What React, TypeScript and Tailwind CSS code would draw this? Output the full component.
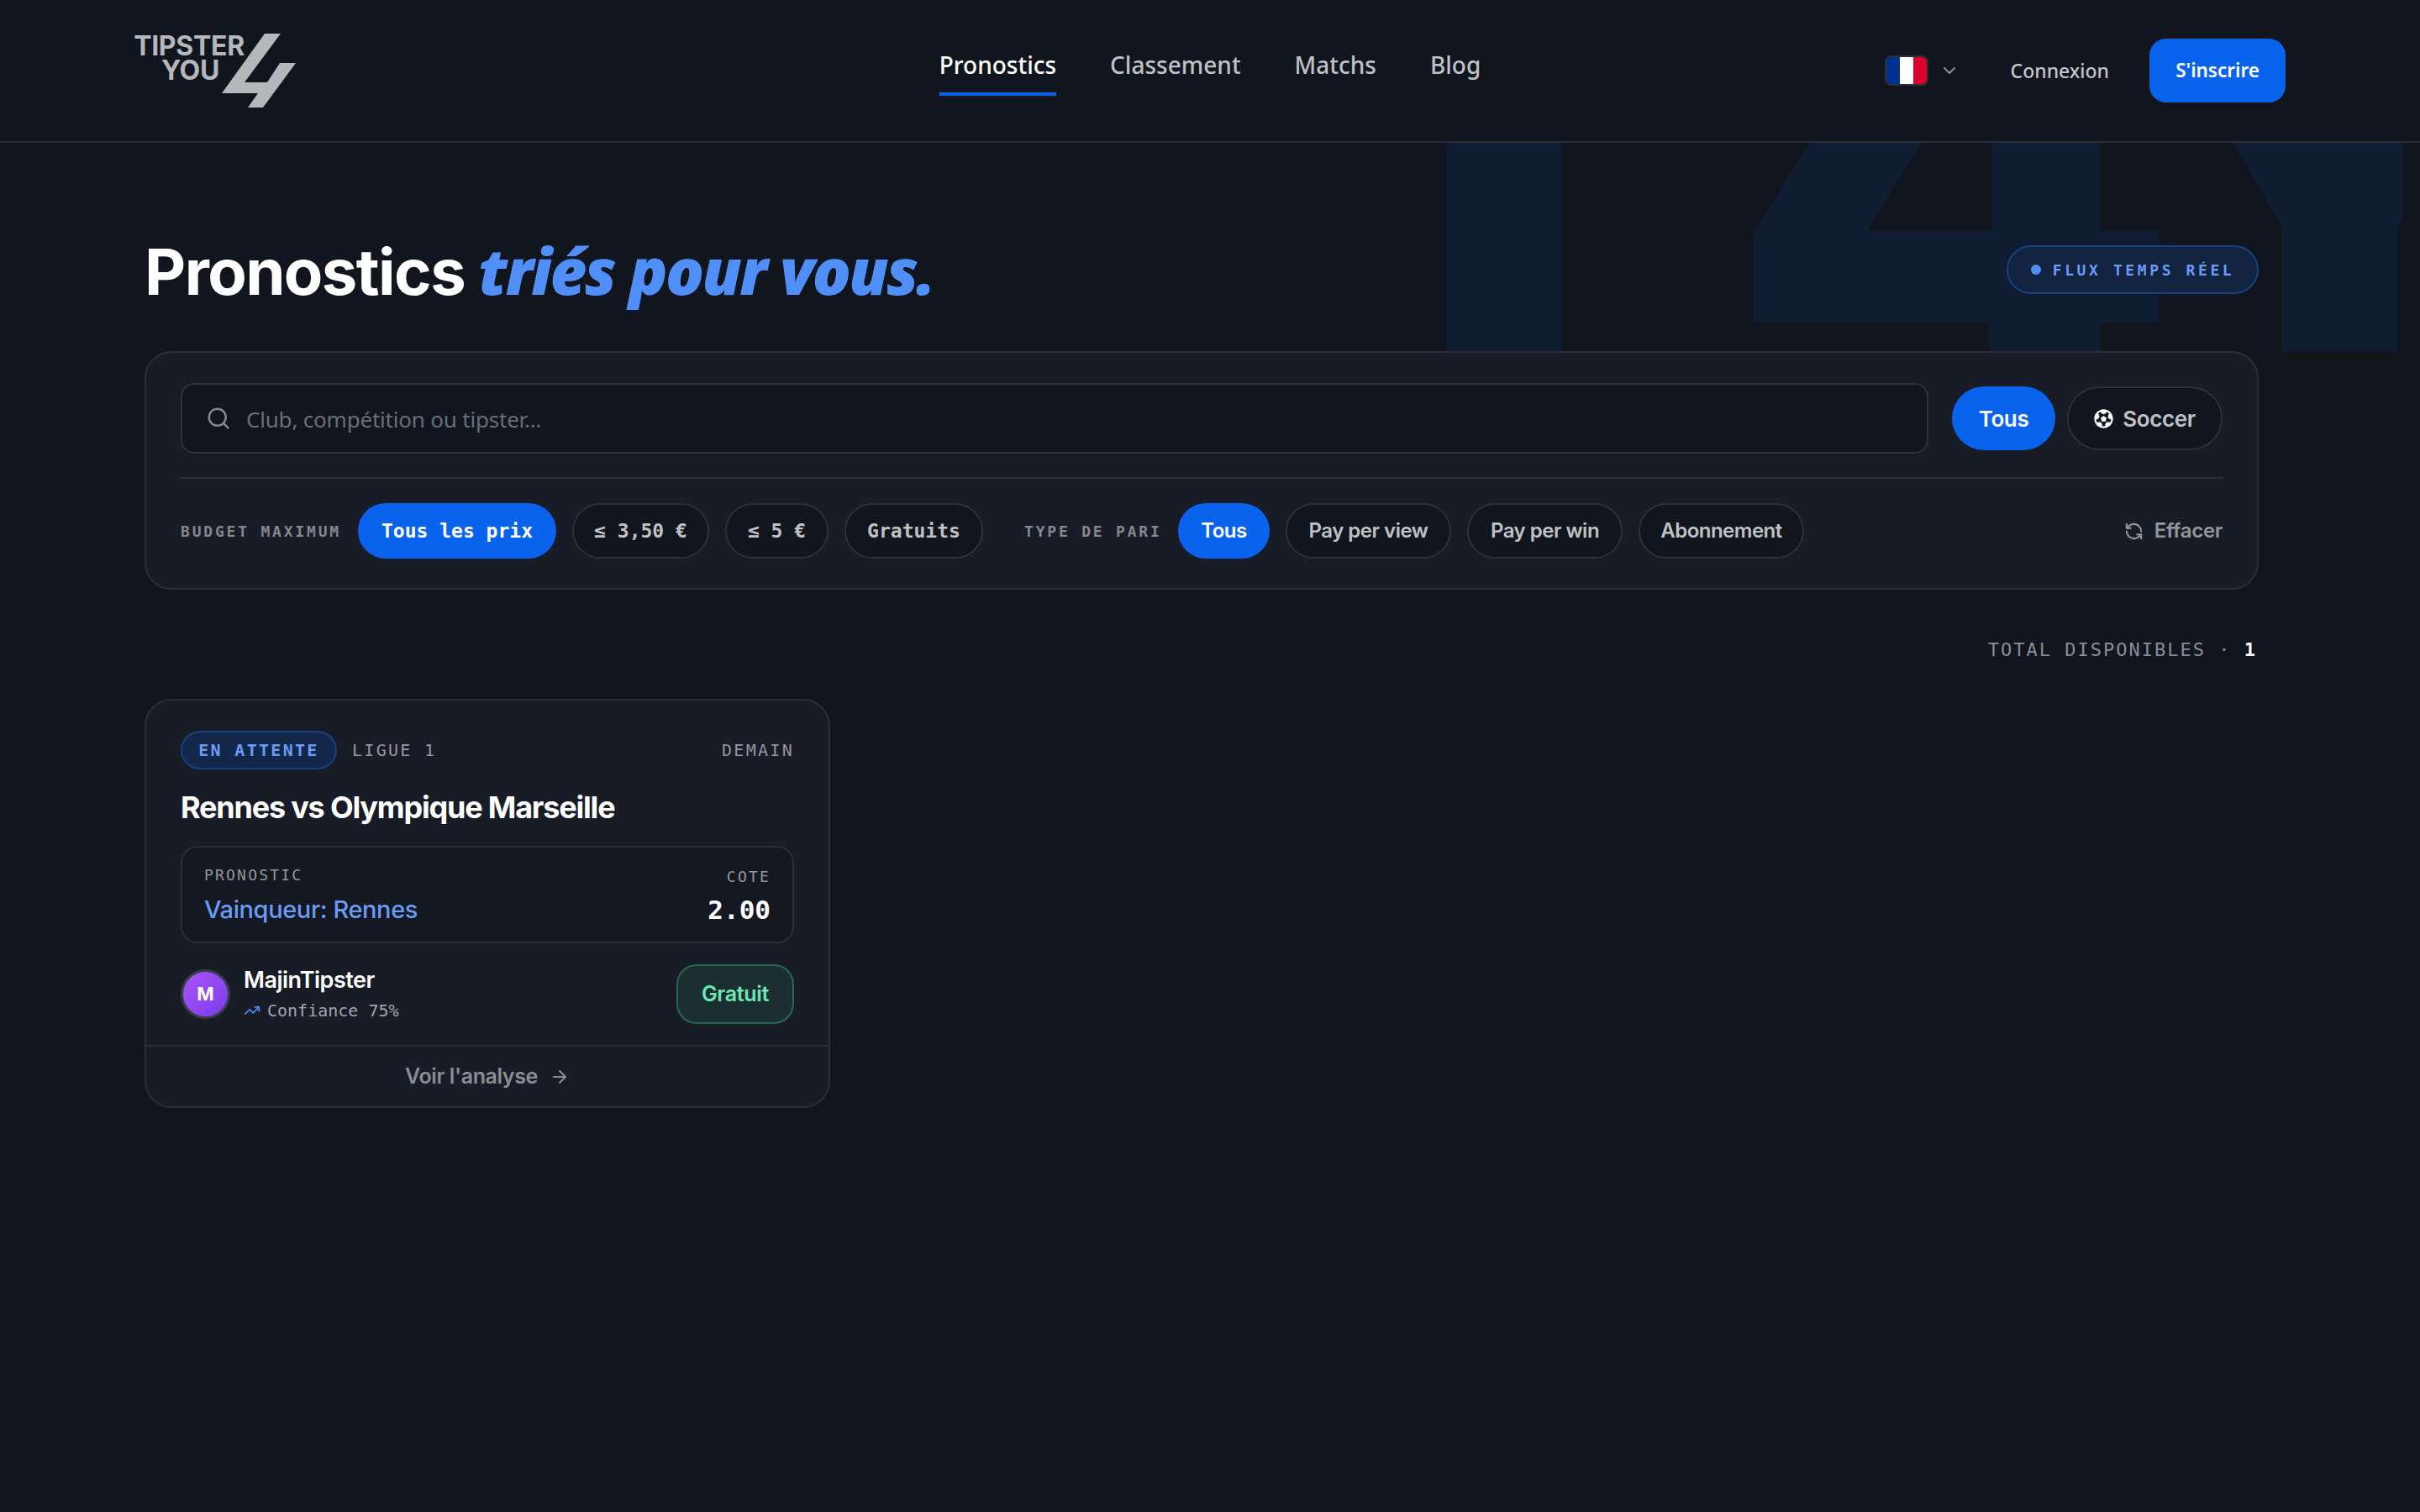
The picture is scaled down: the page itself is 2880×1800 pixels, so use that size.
import { Search, ChevronDown, RefreshCcw, TrendingUp, ArrowRight } from "lucide-react";
import { FaFutbol } from "react-icons/fa";

const sans = "font-['Inter','Noto_Sans',sans-serif]";
const mono = "font-['DejaVu_Sans_Mono',monospace]";

function Chip({ label, active, isMono, w }: { label: string; active?: boolean; isMono?: boolean; w: string }) {
  return (
    <button
      className={
        w +
        " h-[66px] rounded-full flex items-center justify-center whitespace-nowrap " +
        (isMono
          ? mono + " text-[23px] font-bold "
          : "font-['Inter',sans-serif] text-[24px] font-semibold tracking-[-0.5px] ") +
        (active
          ? "bg-[#0a63ec] text-white"
          : "bg-[#11151d] border-2 border-[#2e3038] text-[#bfc1c5]")
      }
    >
      {label}
    </button>
  );
}

export default function App() {
  return (
    <div className="min-h-screen w-full bg-[#11151e] text-white font-['Noto_Sans',sans-serif] overflow-hidden">
      <header className="h-[170px] border-b-2 border-[#2b2e36] px-[160px] flex items-center">
        <div className="flex-1 flex items-start">
          <div className="flex flex-col items-center font-['Inter',sans-serif] font-bold text-[32px] leading-[29px] tracking-[-0.3px] text-[#b5b7bb] w-[130px]">
            <span>TIPSTER</span>
            <span className="pl-[3px]">YOU</span>
          </div>
          <svg width="192" height="88" viewBox="0 0 192 88" className="ml-[-130px]">
            <polygon fill="#b5b7bb" points="155,0 174,0 131,58 158,58 173,35 192,35 153,88 135,88 147,71 104,71" />
          </svg>
        </div>
        <nav className="flex items-center gap-[64px] text-[28px] font-medium text-[#bfc1c5]">
          <a className="text-white pb-[13px] border-b-4 border-[#0a63ec] leading-[40px] mt-[3px]">Pronostics</a>
          <a className="pb-[17px] leading-[40px] mt-[3px]">Classement</a>
          <a className="pb-[17px] leading-[40px] mt-[3px]">Matchs</a>
          <a className="pb-[17px] leading-[40px] mt-[3px]">Blog</a>
        </nav>
        <div className="flex-1 flex items-center justify-end">
          <div className="w-[52px] h-[36px] rounded-[8px] border-2 border-[#2e3038] overflow-hidden flex">
            <span className="flex-1 bg-[#00318f]" />
            <span className="flex-1 bg-white" />
            <span className="flex-1 bg-[#dc002b]" />
          </div>
          <ChevronDown size={24} className="ml-[13px] text-[#8b8d92]" />
          <span className="ml-[61px] text-[23px] font-medium text-[#c3c5c9]">Connexion</span>
          <button className="ml-[48px] w-[162px] h-[76px] rounded-[20px] bg-[#0a63ec] text-[22.5px] font-semibold text-white">
            S'inscrire
          </button>
        </div>
      </header>

      <main className="w-[2860px] relative">
        <div className="absolute top-0 left-0 right-0 h-[248px] overflow-hidden">
          <div className="absolute left-[1519px] top-[-480px] font-['Inter',sans-serif] font-extrabold text-[800px] leading-[1000px] text-[#0a63ec]/10 whitespace-nowrap [font-kerning:none]">
            T<span className="ml-[-10px]">4</span><span className="ml-[-120px]">Y</span>
          </div>
        </div>

        <div className="relative w-[2516px] mx-auto">
          <div className="h-[248px] flex items-start justify-between">
            <h1 className={sans + " mt-[100px] text-[76px] leading-[104px] font-bold tracking-[-1.6px] whitespace-nowrap"}>
              Pronostics{" "}
              <span className="font-['Noto_Sans',sans-serif] italic font-black text-[#4f8ff7] tracking-[-2.6px]">triés pour vous.</span>
            </h1>
            <div className={mono + " mt-[122px] h-[58px] w-[300px] rounded-full border-2 border-[#17417f] bg-[#12233f] flex items-center justify-center gap-[14px] text-[18px] font-bold tracking-[3.6px] text-[#6a9cf5]"}>
              <span className="w-[12px] h-[12px] rounded-full bg-[#4f8ff7]" />
              FLUX TEMPS RÉEL
            </div>
          </div>

          <section className="h-[284px] rounded-[32px] border-2 border-[#2b2e36] bg-[#181c26] px-[41px] pt-[36px]">
            <div className="flex items-center">
              <div className="w-[2080px] h-[84px] rounded-[16px] border-2 border-[#2f323a] bg-[#11151d] flex items-center pl-[28px] gap-[18px]">
                <Search size={30} strokeWidth={2} className="text-[#85878c]" />
                <span className="mt-[2px] text-[26px] text-[#6b6e74] tracking-[-0.2px]">Club, compétition ou tipster...</span>
              </div>
              <button className={sans + " ml-[28px] w-[123px] h-[76px] rounded-full bg-[#0a63ec] text-[26px] font-semibold tracking-[-0.4px]"}>Tous</button>
              <button className={sans + " ml-[14px] w-[185px] h-[76px] rounded-full border-2 border-[#2e3038] bg-[#11151d] text-[26px] font-semibold tracking-[-0.4px] text-[#bfc1c5] flex items-center justify-center gap-[11px]"}>
                <FaFutbol size={23} className="text-white" />
                Soccer
              </button>
            </div>
            <div className="h-[2px] bg-[#2b2e36] mt-[28px]" />
            <div className="flex items-center mt-[29px]">
              <span className={mono + " text-[18px] font-bold tracking-[2.8px] text-[#85878c] w-[211px] whitespace-nowrap"}>BUDGET MAXIMUM</span>
              <div className="flex gap-[19px]">
                <Chip isMono active w="w-[236px]" label="Tous les prix" />
                <Chip isMono w="w-[163px]" label="≤ 3,50 €" />
                <Chip isMono w="w-[123px]" label="≤ 5 €" />
                <Chip isMono w="w-[165px]" label="Gratuits" />
              </div>
              <span className={mono + " ml-[49px] text-[18px] font-bold tracking-[2.8px] text-[#85878c] w-[183px] whitespace-nowrap"}>TYPE DE PARI</span>
              <div className="flex gap-[19px]">
                <Chip active w="w-[109px]" label="Tous" />
                <Chip w="w-[197px]" label="Pay per view" />
                <Chip w="w-[185px]" label="Pay per win" />
                <Chip w="w-[197px]" label="Abonnement" />
              </div>
              <span className={sans + " ml-auto flex items-center gap-[13px] text-[24px] font-semibold tracking-[-0.3px] text-[#94969b]"}>
                <RefreshCcw size={23} strokeWidth={2.2} />
                Effacer
              </span>
            </div>
          </section>

          <div className={mono + " mt-[55px] h-[32px] flex items-center justify-end text-[22px] tracking-[2px] text-[#8b8d92] pr-[2px]"}>
            TOTAL DISPONIBLES ·&nbsp;<span className="text-white font-bold">1</span>
          </div>

          <article className="mt-[43px] w-[816px] h-[487px] rounded-[32px] border-2 border-[#2b2e36] bg-[#181c26] flex flex-col">
            <div className="px-[41px] pt-[36px] flex-1">
              <div className={mono + " flex items-center text-[20px] tracking-[2.3px] text-[#95979c]"}>
                <span className="h-[46px] w-[186px] rounded-full border-2 border-[#17417f] bg-[#12274a] text-[#6a9cf5] font-bold flex items-center justify-center whitespace-nowrap">EN ATTENTE</span>
                <span className="ml-[18px]">LIGUE 1</span>
                <span className="ml-auto">DEMAIN</span>
              </div>
              <h2 className={sans + " mt-[21px] text-[36px] leading-[48px] font-bold tracking-[-1.2px]"}>Rennes vs Olympique Marseille</h2>
              <div className="mt-[22px] h-[116px] rounded-[20px] border-2 border-[#2b2e36] bg-[#141820] px-[26px] flex items-center justify-between">
                <div>
                  <div className={mono + " text-[18px] tracking-[2.2px] text-[#95979c]"}>PRONOSTIC</div>
                  <div className={sans + " mt-[8px] text-[29px] leading-[40px] font-medium tracking-[-0.4px] text-[#6a9cf5]"}>Vainqueur: Rennes</div>
                </div>
                <div className="text-right">
                  <div className={mono + " text-[18px] tracking-[2.2px] text-[#95979c]"}>COTE</div>
                  <div className={mono + " mt-[8px] font-bold text-[31px] leading-[36px] text-white"}>2.00</div>
                </div>
              </div>
              <div className="mt-[25px] flex items-center">
                <div className="w-[59px] h-[59px] rounded-full border-[3px] border-[#3a3d46] bg-gradient-to-br from-[#a855f7] to-[#7c3aed] flex items-center justify-center font-['Inter',sans-serif] text-[22px] font-bold">M</div>
                <div className="ml-[16px]">
                  <div className={sans + " text-[27px] leading-[36px] font-semibold tracking-[-0.5px]"}>MajinTipster</div>
                  <div className={mono + " mt-[3px] flex items-center gap-[8px] text-[20px] text-[#a4a6ab]"}>
                    <TrendingUp size={20} className="text-[#4f8ff7]" />
                    Confiance 75%
                  </div>
                </div>
                <div className={sans + " ml-auto w-[140px] h-[71px] rounded-[24px] border-2 border-[#23694f] bg-[#1b2f30] flex items-center justify-center text-[25px] font-semibold tracking-[-0.3px] text-[#6ee7b7]"}>Gratuit</div>
              </div>
            </div>
            <div className={sans + " h-[73px] border-t-2 border-[#2b2e36] flex items-center justify-center gap-[14px] text-[25px] font-semibold tracking-[-0.4px] text-[#8b8d92]"}>
              Voir l'analyse
              <ArrowRight size={24} />
            </div>
          </article>
        </div>
      </main>
    </div>
  );
}
